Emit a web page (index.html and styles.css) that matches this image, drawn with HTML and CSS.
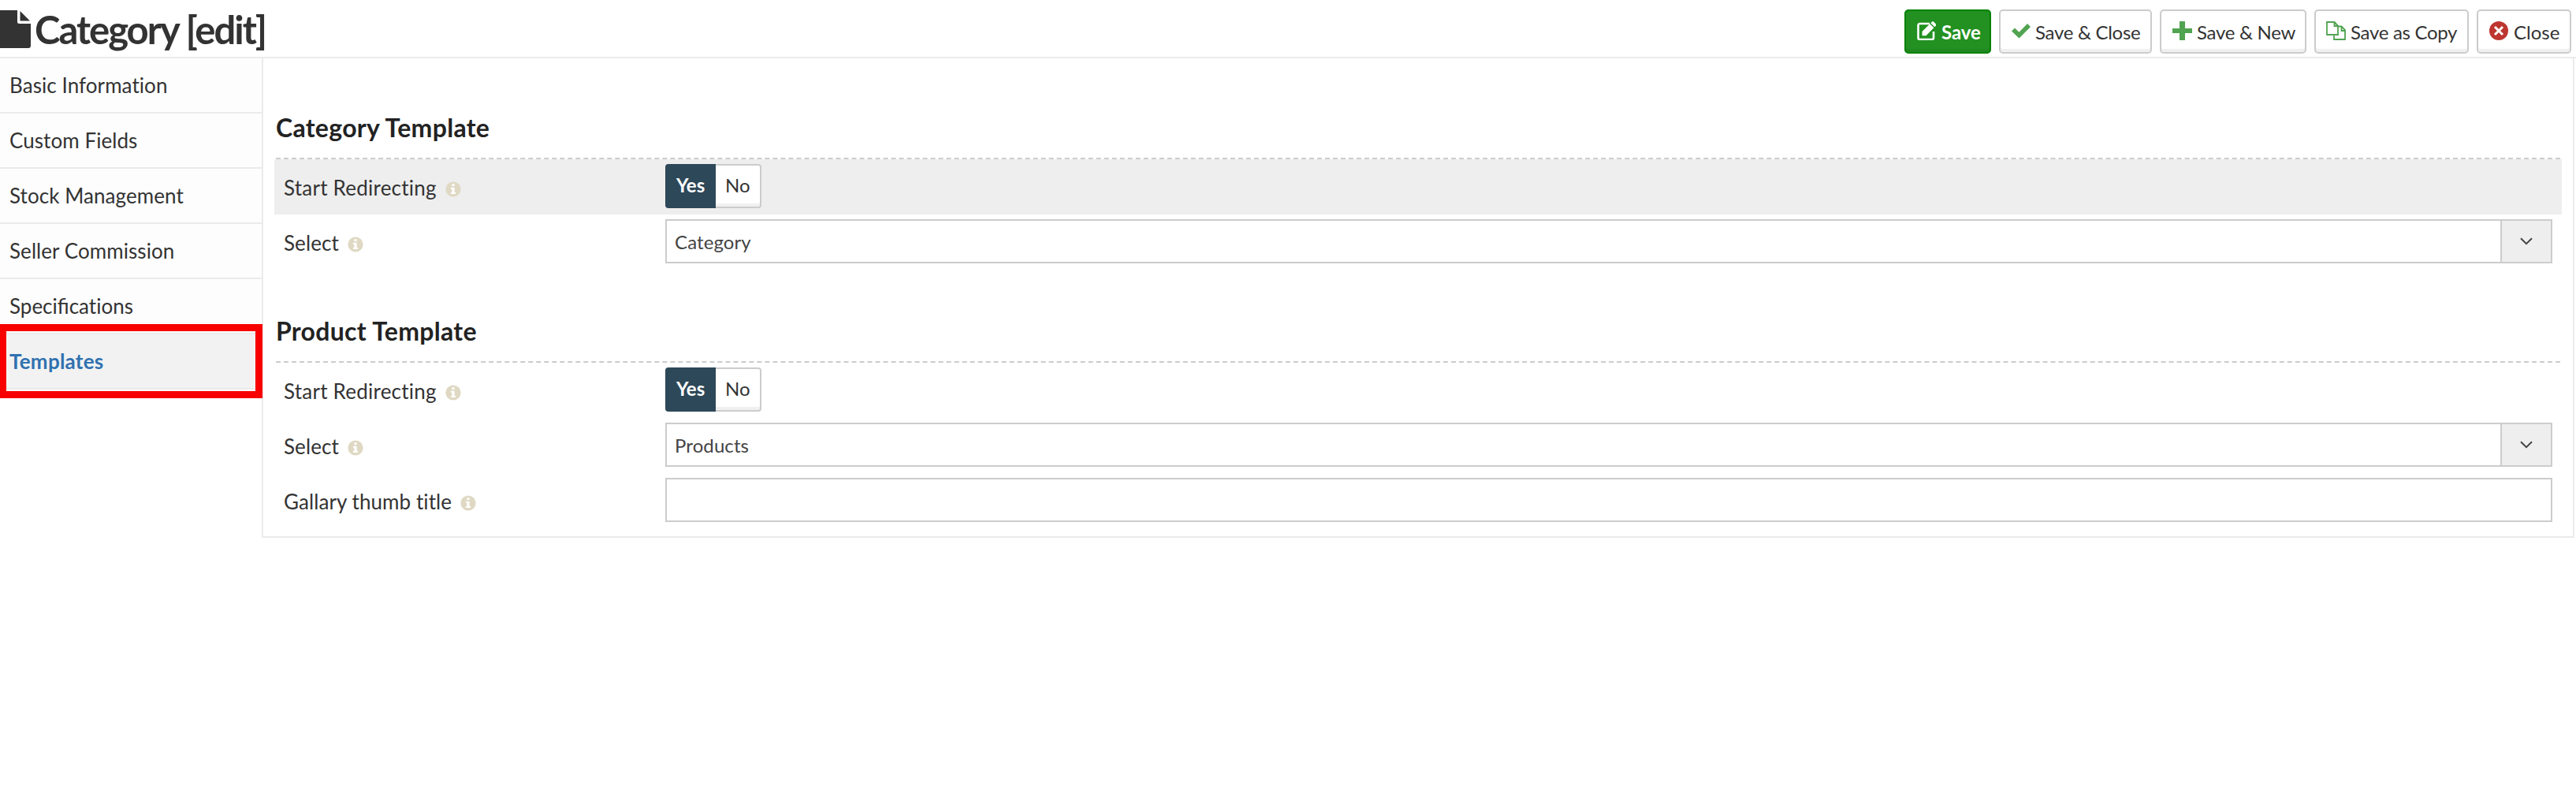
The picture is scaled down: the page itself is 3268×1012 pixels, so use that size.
FILE: index.html
```html
<!DOCTYPE html>
<html lang="en">
<head>
<meta charset="utf-8">
<title>Category [edit]</title>
<link rel="stylesheet" href="styles.css">
</head>
<body>
<svg class="sprite" width="0" height="0">
  <symbol id="info" viewBox="0 0 20 20">
    <circle cx="10" cy="10" r="9.600" fill="#dfd8c3"/>
    <path fill="#fff" d="M8.400 3.200h3.200v2.700H8.400zM6.900 7.700h4.800v6.400h1.400v2H6.900v-2h1.500V9.700H6.900z"/>
  </symbol>
  <symbol id="chevron" viewBox="0 0 16 10">
    <path d="M1 1.200l7 7 7-7" fill="none" stroke="#444" stroke-width="2"/>
  </symbol>
</svg>
<header class="header">
  <h1 class="title">
    <svg class="title-icon" width="39" height="48" viewBox="0 0 39 48"><path fill="#333" d="M0 0h22v14.500a2.500 2.500 0 0 0 2.500 2.500H39v28a3 3 0 0 1-3 3H0zM25.500 1L38 13.500H25.500z"/></svg>
    <span>Category [edit]</span>
  </h1>
  <div class="toolbar">
    <button class="btn btn-save"><svg class="icon" width="24" height="24" viewBox="0 0 24 24"><path d="M16 3H3.500A2 2 0 0 0 1.500 5v16a2 2 0 0 0 2 2H19a2 2 0 0 0 2-2v-8" fill="none" stroke="#fff" stroke-width="2.600"/><path fill="#fff" d="M6.500 18.200v-5.200l9.800-9.800 5 5-9.800 10zM17.300 2.200L19 .5a1.500 1.500 0 0 1 2 0l3 3a1.500 1.500 0 0 1 0 2l-1.700 1.700z"/></svg>Save</button>
    <button class="btn"><svg class="icon" width="24" height="24" viewBox="0 0 24 24"><path fill="#51a351" d="M0 12.500l4-4 5.500 5.200L20 3l4 4L9.500 21.500z"/></svg>Save &amp; Close</button>
    <button class="btn btn-wide"><svg class="icon" width="25" height="24" viewBox="0 0 25 24"><path fill="#51a351" d="M9 0h7v9h9v6h-9v9H9v-9H0V9h9z"/></svg>Save &amp; New</button>
    <button class="btn btn-copy"><svg class="icon" width="25" height="24" viewBox="0 0 25 24"><path d="M9 17H1V1h9.500L15 5.500v3M10.500 1v5H15M15 17h-5v6h14V11l-4.500-4.500H15V17zM19.500 6.500V12H24" fill="none" stroke="#51a351" stroke-width="1.800"/></svg>Save as Copy</button>
    <button class="btn btn-cancel"><svg class="icon" width="24" height="24" viewBox="0 0 24 24"><circle cx="12" cy="12" r="12" fill="#bd362f"/><path d="M7 7l10 10M17 7L7 17" stroke="#fff" stroke-width="3"/></svg>Close</button>
  </div>
</header>
<div class="layout">
  <nav class="tabs">
    <a class="tab">Basic Information</a>
    <a class="tab">Custom Fields</a>
    <a class="tab">Stock Management</a>
    <a class="tab">Seller Commission</a>
    <a class="tab tab-ligature">Specificat&zwnj;ions</a>
    <a class="tab tab-active">Templates<span class="highlight"></span></a>
  </nav>
  <main class="panel">
    <section class="section">
      <h2 class="heading">Category Template</h2>
      <div class="row row-shaded">
        <div class="label label-wide">Start Redirecting<svg class="info" width="20" height="20"><use href="#info"/></svg></div>
        <div class="toggle"><span class="yes">Yes</span><span class="no">No</span></div>
      </div>
      <div class="row">
        <div class="label">Select<svg class="info" width="20" height="20"><use href="#info"/></svg></div>
        <div class="field"><span class="value">Category</span><span class="drop"><svg width="16" height="10"><use href="#chevron"/></svg></span></div>
      </div>
    </section>
    <section class="section">
      <h2 class="heading">Product Template</h2>
      <div class="row">
        <div class="label label-wide">Start Redirecting<svg class="info" width="20" height="20"><use href="#info"/></svg></div>
        <div class="toggle"><span class="yes">Yes</span><span class="no">No</span></div>
      </div>
      <div class="row">
        <div class="label">Select<svg class="info" width="20" height="20"><use href="#info"/></svg></div>
        <div class="field"><span class="value">Products</span><span class="drop"><svg width="16" height="10"><use href="#chevron"/></svg></span></div>
      </div>
      <div class="row">
        <div class="label">Gallary thumb title<svg class="info" width="20" height="20"><use href="#info"/></svg></div>
        <div class="field"></div>
      </div>
    </section>
  </main>
</div>
</body>
</html>
```
FILE: styles.css
```css
* { box-sizing: border-box; }
body { margin: 0; background: #fff; color: #333; font-family: Lato, sans-serif; font-size: 26px; }
.sprite { display: none; }
.header { display: flex; justify-content: space-between; height: 74px; padding: 12px 6px 0 0; border-bottom: 2px solid #ebebeb; }
.title { display: flex; gap: 5px; margin: 0; font-size: 49px; line-height: 50px; font-weight: 700; letter-spacing: -2px; white-space: nowrap; }
.title-icon { margin-top: 1px; }
.toolbar { display: flex; gap: 10px; }
.btn { display: flex; align-items: flex-start; gap: 6px; width: 194px; height: 56px; padding: 13px 0 0 14px; border: 2px solid #ccc; border-radius: 5px; background: #fff; box-shadow: inset 0 -4px 0 #f0f0f0; color: #333; font: 24px/28px Lato, sans-serif; letter-spacing: -0.3px; white-space: nowrap; }
.icon { flex: none; }
.btn-save { gap: 7px; width: 110px; background: #229122; border-color: #048204; box-shadow: inset 0 -4px 0 #208820; color: #fff; font-weight: 700; letter-spacing: -0.1px; }
.btn-wide { width: 186px; }
.btn-copy { width: 196px; padding-left: 13px; }
.btn-cancel { gap: 7px; width: 120px; letter-spacing: 0; }
.layout { display: flex; align-items: flex-start; padding-right: 2px; }
.tabs { width: 332px; }
.tab { position: relative; display: block; height: 70px; padding: 18px 12px 0; border-bottom: 2px solid #ebebeb; background: #fdfdfd; line-height: 32px; letter-spacing: 0.07px; }
.tab-ligature { letter-spacing: 0; }
.tab-active { background: #f2f2f2; color: #3071b0; font-weight: 700; letter-spacing: 0.25px; }
.highlight { position: absolute; left: -1px; top: -13px; width: 334px; height: 94px; border: 9px solid #f80000; }
.panel { flex: 1; height: 608px; padding: 0 14px; border: 2px solid #ebebeb; border-top: 0; }
.section { height: 258px; padding-top: 10px; }
.section + .section { padding-top: 0; margin-top: 10px; }
.heading { height: 118px; margin: 0 2px; padding-top: 60px; border-bottom: 2px dashed #ccc; color: #222; font-size: 32px; line-height: 36px; font-weight: 700; letter-spacing: 0.3px; }
.row { display: grid; grid-template-columns: 484px 1fr; height: 70px; padding: 6px 12px 0; }
.row-shaded { background: #eee; }
.label { display: flex; gap: 11px; padding-top: 14px; line-height: 32px; letter-spacing: 0.08px; }
.label-wide { letter-spacing: 0.23px; }
.info { margin-top: 8px; }
.toggle { display: flex; height: 56px; font-size: 24px; line-height: 32px; }
.yes { width: 64px; padding: 11px 0 0 14px; border-radius: 4px 0 0 4px; background: #2d4858; color: #fff; font-weight: 700; }
.no { width: 58px; padding: 9px 0 0 12px; border: 2px solid #ccc; border-left: 0; border-radius: 0 4px 4px 0; background: #fff; box-shadow: inset 0 -4px 0 #f0f0f0; }
.field { display: flex; justify-content: space-between; height: 56px; border: 2px solid #ccc; background: #fff; color: #444; font-size: 24px; line-height: 52px; }
.value { padding: 1px 0 0 10px; line-height: 51px; letter-spacing: 0.1px; }
.drop { display: flex; width: 64px; align-items: center; justify-content: center; border-left: 2px solid #ccc; background: #eee; }
```
